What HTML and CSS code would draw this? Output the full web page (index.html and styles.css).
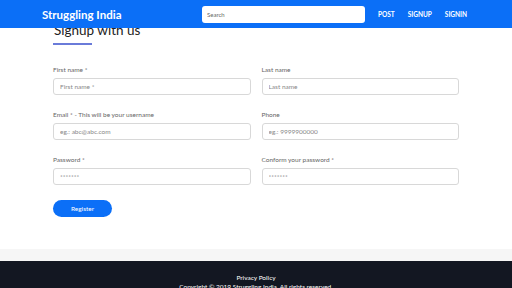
FILE: index.html
```html
<!DOCTYPE html>
<html lang="en">

<head>
    <meta charset="UTF-8">
    <meta name="viewport" content="width=device-width, initial-scale=1.0">
    <title>Struggling India - Signup</title>
    <link rel="stylesheet" href="styles.css">
</head>

<body>

    <!-- Top navigation -->
    <nav class="navbar">
        <div class="nav-inner">
            <a href="#" class="brand">Struggling India</a>
            <input type="text" class="search" placeholder="Search">
            <div class="nav-links">
                <a href="#">POST</a>
                <a href="#">SIGNUP</a>
                <a href="#">SIGNIN</a>
            </div>
        </div>
    </nav>

    <!-- Signup form -->
    <main class="container">
        <h2 class="title">Signup with us</h2>
        <div class="title-line"></div>

        <form class="signup-form">
            <div class="field">
                <label>First name *</label>
                <input type="text" placeholder="First name *">
            </div>
            <div class="field">
                <label>Last name</label>
                <input type="text" placeholder="Last name">
            </div>
            <div class="field">
                <label>Email * - This will be your username</label>
                <input type="email" placeholder="eg.: abc@abc.com">
            </div>
            <div class="field">
                <label>Phone</label>
                <input type="text" placeholder="eg.: 9999900000">
            </div>
            <div class="field">
                <label>Password *</label>
                <input type="password" placeholder="*******">
            </div>
            <div class="field">
                <label>Conform your password *</label>
                <input type="password" placeholder="*******">
            </div>
            <div class="actions">
                <button type="submit" class="btn">Register</button>
            </div>
        </form>
    </main>

    <div class="band"></div>

    <footer class="footer">
        <a href="#">Privacy Policy</a>
        <p>Copyright © 2019 Struggling India. All rights reserved.</p>
    </footer>

</body>

</html>
```

FILE: styles.css
```css
* {
    margin: 0;
    padding: 0;
    box-sizing: border-box;
    font-family: 'Lato', 'Open Sans', sans-serif;
}

body {
    background: #fff;
    color: #333;
    overflow: hidden;
}

/* Navbar */
.navbar {
    position: fixed;
    top: 0;
    left: 0;
    right: 0;
    height: 28px;
    background: #0b6ff7;
    z-index: 10;
}

.nav-inner {
    display: flex;
    align-items: center;
    height: 100%;
    padding: 0 40px 0 42px;
}

.brand {
    color: #fff;
    font-size: 11.5px;
    font-weight: 700;
    text-decoration: none;
    width: 160px;
    flex-shrink: 0;
}

.search {
    width: 163px;
    height: 17px;
    border: none;
    border-radius: 3px;
    padding: 0 5px;
    font-size: 6px;
    outline: none;
    flex-shrink: 0;
}

.search::placeholder {
    color: #666;
}

.nav-links {
    display: flex;
    gap: 13px;
    margin-left: 13px;
}

.nav-links a {
    color: #fff;
    font-size: 6.5px;
    font-weight: 700;
    text-decoration: none;
}

/* Content */
.container {
    width: 406px;
    margin: 0 auto;
    padding-top: 21px;
}

.title {
    font-size: 13.5px;
    font-weight: 400;
    line-height: 19px;
    color: #222;
    padding-left: 1px;
}

.title-line {
    width: 39px;
    height: 2px;
    background: #6a7bd9;
    margin-top: 3px;
}

.signup-form {
    display: grid;
    grid-template-columns: 1fr 1fr;
    column-gap: 11px;
    row-gap: 15px;
    margin-top: 20px;
}

.field {
    display: flex;
    flex-direction: column;
    gap: 3px;
}

.field label {
    font-size: 6.5px;
    line-height: 10px;
    color: #666;
}

.field input {
    height: 17px;
    border: 1px solid #d8d8d8;
    border-radius: 3px;
    padding: 0 6px;
    font-size: 6.5px;
    outline: none;
}

.field input::placeholder {
    color: #888;
}

.actions {
    grid-column: 1 / 3;
    display: flex;
}

.btn {
    width: 59px;
    height: 17px;
    border: none;
    border-radius: 9px;
    background: #0b6ff7;
    color: #fff;
    font-size: 6.5px;
    cursor: pointer;
}

/* Footer */
.band {
    height: 12px;
    background: #f6f6f6;
    margin-top: 32px;
}

.footer {
    background: #131722;
    text-align: center;
    padding-top: 12px;
    height: 40px;
}

.footer a {
    color: #fff;
    font-size: 6.5px;
    text-decoration: none;
    display: block;
    line-height: 9px;
}

.footer p {
    color: #fff;
    font-size: 6.5px;
    line-height: 9px;
}
```
